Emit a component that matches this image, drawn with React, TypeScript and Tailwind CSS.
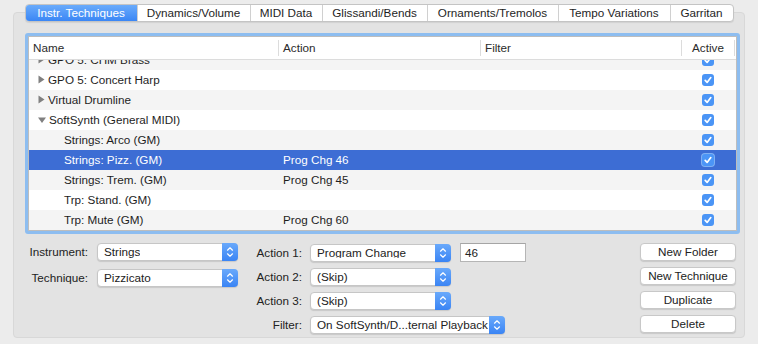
import React from "react";

type Row = {
  name: string;
  folder?: boolean;
  open?: boolean;
  action?: string;
  selected?: boolean;
};

const rows: Row[] = [
  { name: "GPO 5: CHM Brass", folder: true },
  { name: "GPO 5: Concert Harp", folder: true },
  { name: "Virtual Drumline", folder: true },
  { name: "SoftSynth (General MIDI)", folder: true, open: true },
  { name: "Strings: Arco (GM)" },
  { name: "Strings: Pizz. (GM)", action: "Prog Chg 46", selected: true },
  { name: "Strings: Trem. (GM)", action: "Prog Chg 45" },
  { name: "Trp: Stand. (GM)" },
  { name: "Trp: Mute (GM)", action: "Prog Chg 60" },
];

const tabs = [
  { label: "Instr. Techniques", w: "w-[111px]", active: true },
  { label: "Dynamics/Volume", w: "w-[113px]" },
  { label: "MIDI Data", w: "w-[72px]" },
  { label: "Glissandi/Bends", w: "w-[105px]" },
  { label: "Ornaments/Tremolos", w: "w-[131px]" },
  { label: "Tempo Variations", w: "w-[112px]" },
  { label: "Garritan", w: "w-[63px]" },
];

function Check({ selected }: { selected?: boolean }) {
  return (
    <div
      className={
        "w-[12px] h-[12px] rounded-[3px] flex items-center justify-center bg-[#4b95f6] " +
        (selected ? "ring-1 ring-[#7fb0f3]" : "")
      }
    >
      <svg width="12" height="12" viewBox="0 0 12 12">
        <path d="M3.2 6.4 L5.1 8.4 L8.8 3.6" fill="none" stroke="white" strokeWidth="1.7" strokeLinecap="round" strokeLinejoin="round" />
      </svg>
    </div>
  );
}

function Triangle({ open }: { open?: boolean }) {
  return open ? (
    <svg width="8" height="8" viewBox="0 0 8 8" className="shrink-0">
      <path d="M0 1.5 L8 1.5 L4 7 Z" fill="#808080" />
    </svg>
  ) : (
    <svg width="7" height="9" viewBox="0 0 7 9" className="shrink-0">
      <path d="M0.5 0.5 L6.5 4.5 L0.5 8.5 Z" fill="#808080" />
    </svg>
  );
}

function Stepper() {
  return (
    <div className="ml-auto -my-px -mr-px w-[16px] h-[18px] rounded-r-[4px] bg-gradient-to-b from-[#69a9fb] to-[#3a84f4] flex items-center justify-center shrink-0">
      <svg width="16" height="18" viewBox="0 0 16 18">
        <path d="M5.5 7.2 L8 4.8 L10.5 7.2" fill="none" stroke="white" strokeWidth="1.2" strokeLinecap="round" strokeLinejoin="round" />
        <path d="M5.5 10.8 L8 13.2 L10.5 10.8" fill="none" stroke="white" strokeWidth="1.2" strokeLinecap="round" strokeLinejoin="round" />
      </svg>
    </div>
  );
}

function Popup({ text, w }: { text: string; w: string }) {
  return (
    <div
      className={
        w +
        " h-[18px] bg-white rounded-[4px] border border-[#c6c6c6] shadow-[0_1px_1px_rgba(0,0,0,0.12)] flex items-center pl-[6px] text-[#222]"
      }
    >
      <span className="whitespace-nowrap overflow-hidden">{text}</span>
      <Stepper />
    </div>
  );
}

function Button({ text }: { text: string }) {
  return (
    <div className="w-[96px] h-[18px] bg-white rounded-[4px] border border-[#c8c8c8] shadow-[0_1px_1px_rgba(0,0,0,0.12)] flex items-center justify-center text-[#222]">
      {text}
    </div>
  );
}

function Label({ text, w }: { text: string; w: string }) {
  return <div className={w + " text-right text-[#222] shrink-0"}>{text}</div>;
}

export default function App() {
  return (
    <div
      className="w-[758px] h-[344px] bg-[#ececec] pt-[4px] overflow-hidden text-[11.7px] leading-none"
      style={{ fontFamily: '"Liberation Sans", Arial, sans-serif' }}
    >
      {/* Tabs */}
      <div className="relative z-10 flex justify-center">
        <div className="flex h-[18px] rounded-[4px] border border-[#c4c4c4] bg-white shadow-[0_1px_1px_rgba(0,0,0,0.08)] overflow-hidden">
          {tabs.map((t, i) => (
            <div
              key={t.label}
              className={
                t.w +
                " flex items-center justify-center whitespace-nowrap " +
                (t.active
                  ? "bg-gradient-to-b from-[#6aabfb] to-[#3a86f5] text-white"
                  : "text-[#1e1e1e] " + (i > 0 ? "border-l border-[#d0d0d0]" : ""))
              }
            >
              {t.label}
            </div>
          ))}
        </div>
      </div>

      {/* Group box */}
      <div className="mx-[13px] -mt-[10px] h-[326px] rounded-[4px] bg-[#e3e3e3] border border-[#d8d8d8] pl-[11px] pt-[20px]">
        {/* Table with focus ring */}
        <div className="w-[715px] h-[201px] border-[3px] border-[#8dbdf0] rounded-[3px]">
          <div className="h-full border border-[#bdbdbd] bg-white flex flex-col">
            {/* header */}
            <div className="h-[23px] shrink-0 flex items-center border-b border-[#dcdcdc] text-[#2b2b2b]">
              <div className="w-[249px] pl-[4px]">Name</div>
              <div className="w-px h-[16px] bg-[#dcdcdc]" />
              <div className="w-[201px] pl-[4px]">Action</div>
              <div className="w-px h-[16px] bg-[#dcdcdc]" />
              <div className="w-[200px] pl-[4px]">Filter</div>
              <div className="w-px h-[16px] bg-[#dcdcdc]" />
              <div className="w-[52px] text-center">Active</div>
              <div className="w-px h-[16px] bg-[#dcdcdc]" />
            </div>
            {/* rows */}
            <div className="flex-1 overflow-hidden">
              <div className="-mt-[10px]">
                {rows.map((r, i) => {
                  const bg = r.selected
                    ? "bg-[#3d6dd4] text-white"
                    : i % 2 === 0
                    ? "bg-[#f4f4f4] text-[#1e1e1e]"
                    : "bg-white text-[#1e1e1e]";
                  return (
                    <div key={r.name} className={"h-[20px] flex items-center " + bg}>
                      <div
                        className={
                          "w-[249px] flex items-center whitespace-nowrap " +
                          (r.folder ? "pl-[9px] gap-[3px]" : "pl-[35px]")
                        }
                      >
                        {r.folder && <Triangle open={r.open} />}
                        <span>{r.name}</span>
                      </div>
                      <div className="w-[202px] pl-[5px] whitespace-nowrap">{r.action ?? ""}</div>
                      <div className="w-[202px]" />
                      <div className="w-[52px] flex justify-center">
                        <Check selected={r.selected} />
                      </div>
                    </div>
                  );
                })}
              </div>
            </div>
          </div>
        </div>

        {/* Controls */}
        <div className="flex mt-[9px]">
          <div className="flex flex-col gap-[8px]">
            <div className="flex items-center">
              <Label text="Instrument:" w="w-[63px]" />
              <div className="ml-[9px]">
                <Popup text="Strings" w="w-[141px]" />
              </div>
            </div>
            <div className="flex items-center">
              <Label text="Technique:" w="w-[63px]" />
              <div className="ml-[9px]">
                <Popup text="Pizzicato" w="w-[141px]" />
              </div>
            </div>
          </div>

          <div className="flex flex-col gap-[6px]">
            <div className="flex items-center">
              <Label text="Action 1:" w="w-[64px]" />
              <div className="ml-[8px]">
                <Popup text="Program Change" w="w-[141px]" />
              </div>
              <div className="ml-[9px] w-[66px] h-[19px] bg-white border border-[#b5b5b5] border-t-[#a5a5a5] flex items-center pl-[4px] text-[#222]">
                46
              </div>
            </div>
            <div className="flex items-center">
              <Label text="Action 2:" w="w-[64px]" />
              <div className="ml-[8px]">
                <Popup text="(Skip)" w="w-[141px]" />
              </div>
            </div>
            <div className="flex items-center">
              <Label text="Action 3:" w="w-[64px]" />
              <div className="ml-[8px]">
                <Popup text="(Skip)" w="w-[141px]" />
              </div>
            </div>
            <div className="flex items-center">
              <Label text="Filter:" w="w-[64px]" />
              <div className="ml-[8px]">
                <Popup text="On SoftSynth/D...ternal Playback" w="w-[195px]" />
              </div>
            </div>
          </div>

          <div className="ml-[114px] flex flex-col gap-[6px]">
            <Button text="New Folder" />
            <Button text="New Technique" />
            <Button text="Duplicate" />
            <Button text="Delete" />
          </div>
        </div>
      </div>
    </div>
  );
}
